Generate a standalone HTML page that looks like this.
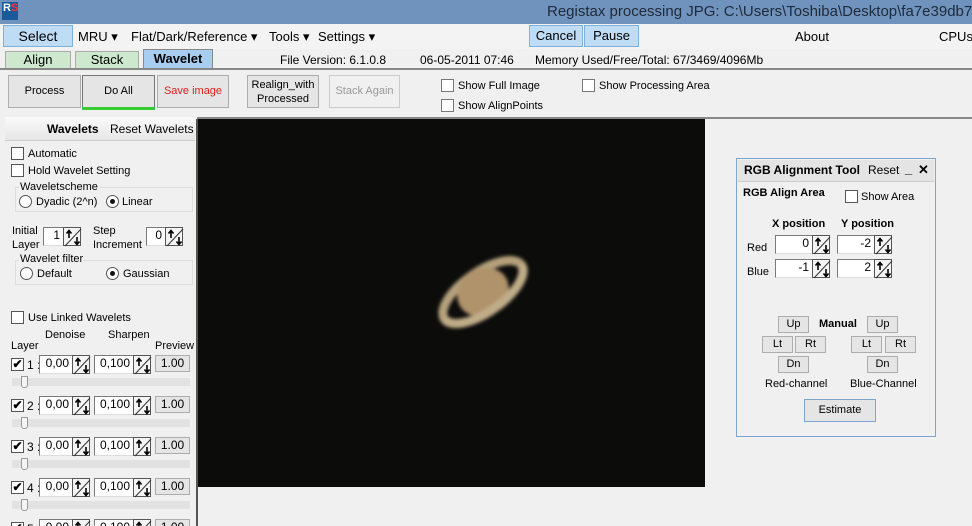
<!DOCTYPE html>
<html><head><meta charset="utf-8"><style>
*{box-sizing:border-box;margin:0;padding:0}
html,body{width:972px;height:526px;overflow:hidden}
body{background:#f0f0f0;font-family:"Liberation Sans",sans-serif;font-size:11px;color:#000;position:relative}
.a{position:absolute;white-space:nowrap}
.btn{position:absolute;border:1px solid #adadad;background:#e5e5e5;text-align:center}
.cb{position:absolute;width:13px;height:13px;border:1px solid #333;background:#fff}
.rd{position:absolute;width:13px;height:13px;border:1px solid #333;border-radius:50%;background:#fff}
.rd.on::after{content:"";position:absolute;left:3px;top:3px;width:5px;height:5px;border-radius:50%;background:#111}
.inp{position:absolute;background:#fff;border:1px solid #7a7a7a;border-right:none;border-bottom-color:#ddd;text-align:right;padding-right:3px;font-size:12px}
.sp{position:absolute;width:18px;height:19px;border:1px solid #555;background:#f4f4f4}
</style></head><body>
<div class="a" style="left:0;top:0;width:972px;height:24px;background:#6f93bd"></div>
<div class="a" style="left:2px;top:2px;width:16px;height:18px;background:#1a5a9a"></div>
<div class="a" style="left:3px;top:2px;font-size:11px;color:#fff;font-weight:bold">R<span style="color:#f33">S</span></div>
<div class="a" style="left:547px;top:3px;font-size:15px;color:#1e2a3a">Registax processing JPG: C:\Users\Toshiba\Desktop\fa7e39db7de</div>
<div class="a" style="left:0;top:24px;width:972px;height:25px;background:#f3f3f3"></div>
<div class="a" style="left:3px;top:25px;width:70px;height:22px;background:#bfdcf5;border:1px solid #7eb0de;font-size:14px;text-align:center;line-height:20px">Select</div>
<div class="a" style="left:78px;top:29px;font-size:13px">MRU ▾</div>
<div class="a" style="left:131px;top:29px;font-size:13px">Flat/Dark/Reference ▾</div>
<div class="a" style="left:269px;top:29px;font-size:13px">Tools ▾</div>
<div class="a" style="left:318px;top:29px;font-size:13px">Settings ▾</div>
<div class="a" style="left:529px;top:25px;width:54px;height:22px;background:#bfdcf5;border:1px solid #7eb0de;font-size:13px;text-align:center;line-height:20px">Cancel</div>
<div class="a" style="left:584px;top:25px;width:55px;height:22px;background:#bfdcf5;border:1px solid #7eb0de;font-size:13px;text-align:center;line-height:20px">Pause</div>
<div class="a" style="left:795px;top:29px;font-size:13px">About</div>
<div class="a" style="left:939px;top:29px;font-size:13px">CPUs</div>
<div class="a" style="left:5px;top:51px;width:66px;height:17px;background:#cde8cd;border:1px solid #aaa;border-bottom:none;font-size:13px;text-align:center;line-height:16px">Align</div>
<div class="a" style="left:75px;top:51px;width:64px;height:17px;background:#cde8cd;border:1px solid #aaa;border-bottom:none;font-size:13px;text-align:center;line-height:16px">Stack</div>
<div class="a" style="left:143px;top:49px;width:70px;height:19px;background:#a9cdf0;border:1px solid #888;border-bottom:none;font-size:13px;font-weight:bold;text-align:center;line-height:17px">Wavelet</div>
<div class="a" style="left:280px;top:53px;font-size:12px">File Version: 6.1.0.8</div>
<div class="a" style="left:420px;top:53px;font-size:12px">06-05-2011 07:46</div>
<div class="a" style="left:535px;top:53px;font-size:12px">Memory Used/Free/Total: 67/3469/4096Mb</div>
<div class="a" style="left:0;top:68px;width:972px;height:2px;background:#888"></div>
<div class="btn" style="left:8px;top:75px;width:73px;height:33px;line-height:31px">Process</div>
<div class="btn" style="left:82px;top:75px;width:73px;height:33px;line-height:31px;border-color:#777">Do All</div>
<div class="a" style="left:82px;top:107px;width:73px;height:3px;background:#3c3"></div>
<div class="btn" style="left:157px;top:75px;width:72px;height:33px;line-height:31px;color:#e02020">Save image</div>
<div class="btn" style="left:247px;top:75px;width:72px;height:33px;line-height:14px;padding-top:2px">Realign_with<br>Processed</div>
<div class="btn" style="left:329px;top:75px;width:71px;height:33px;line-height:31px;color:#999;background:#f0f0f0;border-color:#ccc">Stack Again</div>
<div class="cb" style="left:441px;top:79px;border-color:#777"></div><div class="a" style="left:458px;top:80px">Show Full Image</div>
<div class="cb" style="left:441px;top:99px;border-color:#777"></div><div class="a" style="left:458px;top:100px">Show AlignPoints</div>
<div class="cb" style="left:582px;top:79px;border-color:#777"></div><div class="a" style="left:599px;top:80px">Show Processing Area</div>
<div class="a" style="left:197px;top:117px;width:775px;height:2px;background:#888"></div>
<div class="a" style="left:5px;top:117px;width:190px;height:24px;background:linear-gradient(#fafafa,#e6e6e6);border-bottom:1px solid #ccc"></div>
<div class="a" style="left:47px;top:122px;font-size:12px;font-weight:bold">Wavelets</div>
<div class="a" style="left:110px;top:122px;font-size:12px">Reset Wavelets</div>
<div class="a" style="left:196px;top:119px;width:2px;height:407px;background:#555"></div>
<div class="cb" style="left:11px;top:147px;border-color:#555"></div><div class="a" style="left:28px;top:148px">Automatic</div>
<div class="cb" style="left:11px;top:164px;border-color:#555"></div><div class="a" style="left:28px;top:165px">Hold Wavelet Setting</div>
<div class="a" style="left:15px;top:187px;width:178px;height:25px;border:1px solid #ddd"></div>
<div class="a" style="left:19px;top:181px;background:#f0f0f0;padding:0 1px">Waveletscheme</div>
<div class="rd" style="left:19px;top:195px;border-color:#555"></div><div class="a" style="left:36px;top:196px">Dyadic (2^n)</div>
<div class="rd on" style="left:106px;top:195px;border-color:#555"></div><div class="a" style="left:122px;top:196px">Linear</div>
<div class="a" style="left:12px;top:224px;line-height:14px">Initial<br>Layer</div>
<div class="inp" style="left:43px;top:227px;width:20px;height:19px">1</div><div class="sp" style="left:63px;top:227px"></div>
<div class="a" style="left:93px;top:224px;line-height:14px">Step<br>Increment</div>
<div class="inp" style="left:146px;top:227px;width:19px;height:19px">0</div><div class="sp" style="left:165px;top:227px"></div>
<div class="a" style="left:15px;top:260px;width:178px;height:25px;border:1px solid #ddd"></div>
<div class="a" style="left:19px;top:253px;background:#f0f0f0;padding:0 1px">Wavelet filter</div>
<div class="rd" style="left:20px;top:267px;border-color:#555"></div><div class="a" style="left:37px;top:268px">Default</div>
<div class="rd on" style="left:106px;top:267px;border-color:#555"></div><div class="a" style="left:123px;top:268px">Gaussian</div>
<div class="cb" style="left:11px;top:311px;border-color:#555"></div><div class="a" style="left:28px;top:312px">Use Linked Wavelets</div>
<div class="a" style="left:45px;top:329px">Denoise</div>
<div class="a" style="left:108px;top:329px">Sharpen</div>
<div class="a" style="left:11px;top:340px">Layer</div>
<div class="a" style="left:155px;top:340px">Preview</div>
<div id="rows"></div>
<div class="a" style="left:198px;top:119px;width:507px;height:368px;background:#0c0c0b"></div>
<svg class="a" style="left:420px;top:240px" width="140" height="110" viewBox="0 0 140 110">
<defs><filter id="bl"><feGaussianBlur stdDeviation="1.8"/></filter></defs>
<g filter="url(#bl)" transform="rotate(-35 63 52)">
<ellipse cx="63" cy="52" rx="47" ry="20" fill="none" stroke="#b5a27c" stroke-width="9"/>
<ellipse cx="63" cy="52" rx="27" ry="23" fill="#b0936a"/>
<path d="M16 52 A47 20 0 0 0 110 52" fill="none" stroke="#c0ad88" stroke-width="9"/>
</g></svg>
<div class="a" style="left:736px;top:158px;width:200px;height:279px;border:1px solid #7aa6cf;background:#f0f0f0"></div>
<div class="a" style="left:738px;top:160px;width:196px;height:22px;background:#e4e4e4;border-bottom:1px solid #ccc"></div>
<div class="a" style="left:744px;top:163px;font-size:12px;font-weight:bold">RGB Alignment Tool</div>
<div class="a" style="left:868px;top:163px;font-size:12px">Reset</div>
<div class="a" style="left:905px;top:161px;font-size:13px;font-weight:bold">_</div>
<div class="a" style="left:918px;top:162px;font-size:13px;font-weight:bold">✕</div>
<div class="a" style="left:743px;top:187px;font-weight:bold">RGB Align Area</div>
<div class="cb" style="left:845px;top:190px;border-color:#555"></div><div class="a" style="left:861px;top:191px">Show Area</div>
<div class="a" style="left:772px;top:218px;font-weight:bold">X position</div>
<div class="a" style="left:841px;top:218px;font-weight:bold">Y position</div>
<div class="a" style="left:747px;top:242px">Red</div>
<div class="a" style="left:747px;top:266px">Blue</div>
<div class="inp" style="left:775px;top:235px;width:37px;height:19px">0</div><div class="sp" style="left:812px;top:235px"></div>
<div class="inp" style="left:837px;top:235px;width:37px;height:19px">-2</div><div class="sp" style="left:874px;top:235px"></div>
<div class="inp" style="left:775px;top:259px;width:37px;height:19px">-1</div><div class="sp" style="left:812px;top:259px"></div>
<div class="inp" style="left:837px;top:259px;width:37px;height:19px">2</div><div class="sp" style="left:874px;top:259px"></div>
<div class="btn" style="left:778px;top:316px;width:31px;height:17px;line-height:15px">Up</div>
<div class="a" style="left:819px;top:318px;font-weight:bold">Manual</div>
<div class="btn" style="left:867px;top:316px;width:31px;height:17px;line-height:15px">Up</div>
<div class="btn" style="left:762px;top:336px;width:31px;height:17px;line-height:15px">Lt</div>
<div class="btn" style="left:795px;top:336px;width:31px;height:17px;line-height:15px">Rt</div>
<div class="btn" style="left:851px;top:336px;width:31px;height:17px;line-height:15px">Lt</div>
<div class="btn" style="left:885px;top:336px;width:31px;height:17px;line-height:15px">Rt</div>
<div class="btn" style="left:778px;top:356px;width:31px;height:17px;line-height:15px">Dn</div>
<div class="btn" style="left:867px;top:356px;width:31px;height:17px;line-height:15px">Dn</div>
<div class="a" style="left:765px;top:378px">Red-channel</div>
<div class="a" style="left:850px;top:378px">Blue-Channel</div>
<div class="btn" style="left:804px;top:399px;width:72px;height:23px;line-height:21px;border-color:#7aa6cf">Estimate</div>
<script>
var svg='<svg width="18" height="19" viewBox="0 0 18 19"><line x1="1" y1="18" x2="17" y2="1" stroke="#333"/><path d="M5 10V3M2.5 5.5L5 2.5 7.5 5.5" stroke="#000" stroke-width="1.6" fill="none"/><path d="M13 9v7M10.5 13.5L13 16.5 15.5 13.5" stroke="#000" stroke-width="1.6" fill="none"/></svg>';
var h='';
for(var i=0;i<5;i++){var y=355+i*41;
h+='<div class="cb" style="left:11px;top:'+(y+3)+'px;border-color:#555;font-size:12px;line-height:10px;text-align:center;font-weight:bold">✔</div>';
h+='<div class="a" style="left:27px;top:'+(y+3)+'px;font-size:12px">'+(i+1)+' :</div>';
h+='<div class="inp" style="left:39px;top:'+y+'px;width:33px;height:19px">0,00</div><div class="sp" style="left:72px;top:'+y+'px"></div>';
h+='<div class="inp" style="left:94px;top:'+y+'px;width:39px;height:19px">0,100</div><div class="sp" style="left:133px;top:'+y+'px"></div>';
h+='<div class="btn" style="left:155px;top:'+y+'px;width:35px;height:17px;line-height:15px;font-size:12px">1.00</div>';
if(i<4){h+='<div class="a" style="left:12px;top:'+(y+23)+'px;width:178px;height:8px;background:#e2e2e2"></div>';
h+='<div class="a" style="left:21px;top:'+(y+21)+'px;width:7px;height:12px;background:#f4f4f4;border:1px solid #999;border-radius:0 0 3px 3px"></div>';}}
document.getElementById('rows').outerHTML=h;
document.querySelectorAll('.sp').forEach(function(e){e.innerHTML=svg});
</script>
</body></html>
